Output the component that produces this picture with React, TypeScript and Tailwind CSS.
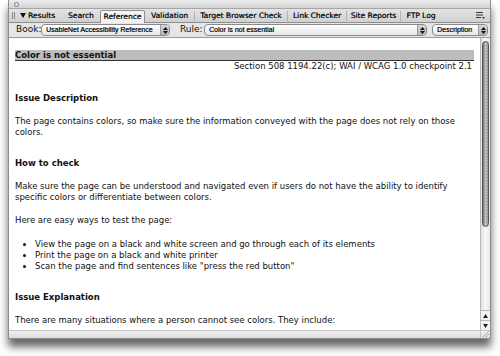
import React from "react";

// [label, width] — widths taken from where the tabs sit in the strip
const tabs: [string, string][] = [
  ["Search", "w-[38px]"],
  ["Reference", "w-[45px]"],
  ["Validation", "w-[49px]"],
  ["Target Browser Check", "w-[93px]"],
  ["Link Checker", "w-[59px]"],
  ["Site Reports", "w-[54px]"],
  ["FTP Log", "w-[41px]"],
];

function Stepper() {
  return (
    <span className="flex flex-col items-center justify-center gap-[1px] w-[9px] h-full border-l border-[#9a9a9a] bg-gradient-to-b from-[#d8d8d8] to-[#b4b4b4]">
      <svg width="5" height="3" viewBox="0 0 5 3">
        <path d="M2.5 0 L5 3 L0 3 Z" fill="#111" />
      </svg>
      <svg width="5" height="3" viewBox="0 0 5 3">
        <path d="M0 0 L5 0 L2.5 3 Z" fill="#111" />
      </svg>
    </span>
  );
}

function Select({ label, className }: { label: string; className: string }) {
  return (
    <div
      className={`flex items-stretch h-[12px] rounded-[4px] border border-[#8a8a8a] bg-gradient-to-b from-white to-[#e6e6e6] overflow-hidden ${className}`}
    >
      <span
        className="flex-1 pl-[4px] text-[7px] leading-[10px] text-[#1a1a1a] whitespace-nowrap overflow-hidden [text-shadow:0.3px_0_0_#333]"
        style={{ fontFamily: '"Liberation Sans", Arial, sans-serif' }}
      >
        {label}
      </span>
      <Stepper />
    </div>
  );
}

function Scrollbar() {
  return (
    <div className="w-[10px] flex flex-col border-l border-[#b8b8b8] bg-gradient-to-r from-[#e2e2e2] via-[#f8f8f8] to-[#e6e6e6]">
      <div className="flex-1 pt-[3px] px-[1px]">
        <div className="h-[186px] rounded-full border border-[#555] bg-[repeating-linear-gradient(0deg,rgba(0,0,0,0.08)_0px,rgba(0,0,0,0.08)_1px,transparent_1px,transparent_3px),linear-gradient(90deg,#6a6a6a,#c8c8c8_45%,#9a9a9a)]" />
      </div>
      <div className="h-[10px] flex items-center justify-center border-t border-[#b8b8b8] bg-[#f2f2f2]">
        <svg width="5" height="4" viewBox="0 0 5 4">
          <path d="M2.5 0 L5 4 L0 4 Z" fill="#222" />
        </svg>
      </div>
      <div className="h-[10px] flex items-center justify-center border-t border-[#b8b8b8] bg-[#f2f2f2]">
        <svg width="5" height="4" viewBox="0 0 5 4">
          <path d="M0 0 L5 0 L2.5 4 Z" fill="#222" />
        </svg>
      </div>
    </div>
  );
}

export default function App() {
  return (
    <div
      className="w-[500px] h-[356px] bg-white overflow-hidden"
      style={{ fontFamily: '"DejaVu Sans", Verdana, sans-serif' }}
    >
      <div className="ml-[8px] w-[483px] h-[339px] flex flex-col border-x border-b border-[#8c8c8c] shadow-[0_8px_8px_rgba(0,0,0,0.6)] bg-white">
        {/* top strip */}
        <div className="h-[9px] flex items-center pl-[5px] bg-gradient-to-b from-[#ececec] to-[#d2d2d2] border-b border-[#a6a6a6]">
          <span className="w-[5px] h-[5px] rounded-full border border-[#777] bg-[#eee]" />
        </div>

        {/* tab bar */}
        <div className="h-[14px] flex items-end bg-gradient-to-b from-[#e4e4e4] to-[#d0d0d0] border-b border-[#8e8e8e] text-[7.5px] leading-[12px] text-[#111] whitespace-nowrap [text-shadow:0.25px_0_0_#333]">
          <div className="w-[53px] self-center flex items-center">
            <span className="ml-[3px] w-[3px] h-[7px] border-x border-[#888]" />
            <span className="flex items-center ml-[5px] gap-[2px]">
              <svg width="6" height="5" viewBox="0 0 6 5">
                <path d="M0 0 L6 0 L3 5 Z" fill="#111" />
              </svg>
              Results
            </span>
          </div>
          {tabs.map(([t, w], i) => (
            <span
              key={t}
              className={
                t === "Reference"
                  ? `${w} text-center h-[13px] bg-[#f4f4f4] border border-b-0 border-[#8e8e8e] rounded-t-[2px] -mb-[1px] leading-[12px]`
                  : `${w} text-center h-[10px] leading-[10px] self-center ${i > 2 ? "border-l border-[#b2b2b2]" : ""}`
              }
            >
              {t}
            </span>
          ))}
          <span className="ml-auto mr-[5px] self-center">
            <svg width="9" height="7" viewBox="0 0 9 7">
              <path d="M0 0.5 H7 M0 3 H7 M0 5.5 H5" stroke="#333" strokeWidth="1" />
              <path d="M6 5 L9 5 L7.5 7 Z" fill="#333" />
            </svg>
          </span>
        </div>

        {/* toolbar */}
        <div className="h-[15px] flex items-center bg-[#e6e6e6] border-b border-[#9a9a9a] text-[9px] text-[#111] whitespace-nowrap">
          <span className="w-[32px] pl-[7px]">Book:</span>
          <Select label="UsableNet Accessibility Reference" className="w-[129px]" />
          <span className="w-[34px] pl-[10px]">Rule:</span>
          <Select label="Color is not essential" className="w-[223px]" />
          <Select label="Description" className="w-[56px] ml-[5px]" />
        </div>

        {/* content */}
        <div className="flex-1 flex min-h-0">
          <div className="flex-1 overflow-hidden px-[6px] pt-[12px] text-[8.5px] leading-[11px] text-[#111]">
            <div className="bg-[#bdbdbd] border-b border-[#333] h-[11px] font-bold leading-[10px]">
              Color is not essential
            </div>
            <div className="text-right pr-[2px]">
              Section 508 1194.22(c); WAI / WCAG 1.0 checkpoint 2.1
            </div>

            <h3 className="font-bold mt-[21px]">Issue Description</h3>
            <p className="mt-[12px]">
              The page contains colors, so make sure the information conveyed with the page does not rely on those colors.
            </p>

            <h3 className="font-bold mt-[20px]">How to check</h3>
            <p className="mt-[12px]">
              Make sure the page can be understood and navigated even if users do not have the ability to identify specific colors or differentiate between colors.
            </p>
            <p className="mt-[12px]">Here are easy ways to test the page:</p>
            <ul className="mt-[13px] pl-[20px] list-disc">
              <li>View the page on a black and white screen and go through each of its elements</li>
              <li>Print the page on a black and white printer</li>
              <li>Scan the page and find sentences like "press the red button"</li>
            </ul>

            <h3 className="font-bold mt-[20px]">Issue Explanation</h3>
            <p className="mt-[12px]">There are many situations where a person cannot see colors. They include:</p>
          </div>
          <Scrollbar />
        </div>

        {/* bottom bar */}
        <div className="h-[8px] flex justify-end bg-gradient-to-b from-[#f0f0f0] to-[#dcdcdc] border-t border-[#c4c4c4]">
          <div className="w-[10px] border-l border-[#c4c4c4] flex items-end justify-end pr-[1px] pb-[1px]">
            <svg width="6" height="6" viewBox="0 0 6 6">
              <path d="M6 0 L0 6 M6 3 L3 6" stroke="#999" strokeWidth="0.8" />
            </svg>
          </div>
        </div>
      </div>
    </div>
  );
}
